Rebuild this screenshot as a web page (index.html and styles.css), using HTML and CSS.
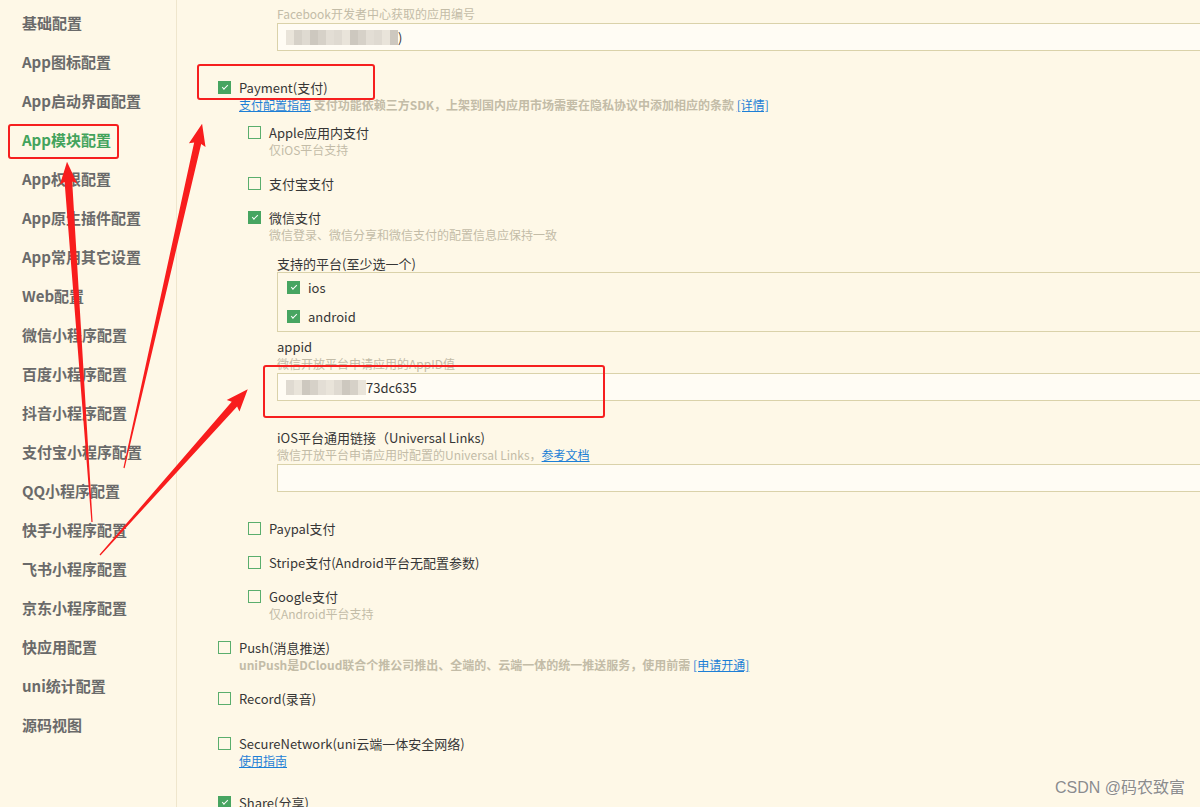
FILE: index.html
```html
<!DOCTYPE html>
<html lang="zh-CN">
<head>
    <meta charset="UTF-8">
    <title>manifest.json - App模块配置</title>
    <link rel="stylesheet" href="styles.css">
</head>
<body>
<div class="page">
    <nav class="side">
        <a class="side-item">基础配置</a>
        <a class="side-item">App图标配置</a>
        <a class="side-item">App启动界面配置</a>
        <a class="side-item active">App模块配置</a>
        <a class="side-item">App权限配置</a>
        <a class="side-item">App原生插件配置</a>
        <a class="side-item">App常用其它设置</a>
        <a class="side-item">Web配置</a>
        <a class="side-item">微信小程序配置</a>
        <a class="side-item">百度小程序配置</a>
        <a class="side-item">抖音小程序配置</a>
        <a class="side-item">支付宝小程序配置</a>
        <a class="side-item">QQ小程序配置</a>
        <a class="side-item">快手小程序配置</a>
        <a class="side-item">飞书小程序配置</a>
        <a class="side-item">京东小程序配置</a>
        <a class="side-item">快应用配置</a>
        <a class="side-item">uni统计配置</a>
        <a class="side-item">源码视图</a>
    </nav>

    <main class="main">
        <!-- tail of the facebook block, scrolled off the top -->
        <div class="fields fields-top">
            <div class="field">
                <div class="field-desc">Facebook开发者中心获取的应用编号</div>
                <div class="input">
                    <span class="mosaic">
                        <i class="m1"></i><i class="m2"></i><i class="m3"></i><i class="m4"></i><i class="m2"></i><i class="m5"></i><i class="m3"></i><i class="m1"></i><i class="m4"></i><i class="m2"></i><i class="m5"></i><i class="m3"></i><i class="m1"></i><i class="m4"></i>
                    </span>
                    <span>)</span>
                </div>
            </div>
        </div>

        <div class="item">
            <div class="row"><span class="cb on"></span>Payment(支付)</div>
            <div class="desc strong"><a class="link">支付配置指南</a> 支付功能依赖三方SDK，上架到国内应用市场需要在隐私协议中添加相应的条款 <a class="link">[详情]</a></div>
            <div class="sub">
                <div class="item">
                    <div class="row"><span class="cb"></span>Apple应用内支付</div>
                    <div class="desc">仅iOS平台支持</div>
                </div>
                <div class="item">
                    <div class="row"><span class="cb"></span>支付宝支付</div>
                </div>
                <div class="item">
                    <div class="row"><span class="cb on"></span>微信支付</div>
                    <div class="desc">微信登录、微信分享和微信支付的配置信息应保持一致</div>
                    <div class="fields">
                        <div class="field field-tight">
                            <div class="field-label">支持的平台(至少选一个)</div>
                            <div class="platforms">
                                <div class="row"><span class="cb on"></span>ios</div>
                                <div class="row"><span class="cb on"></span>android</div>
                            </div>
                        </div>
                        <div class="field">
                            <div class="field-label">appid</div>
                            <div class="field-desc">微信开放平台申请应用的AppID值</div>
                            <div class="input">
                                <span class="mosaic">
                                    <i class="m3"></i><i class="m1"></i><i class="m4"></i><i class="m2"></i><i class="m5"></i><i class="m1"></i><i class="m3"></i><i class="m4"></i><i class="m2"></i><i class="m1"></i>
                                </span>
                                <span>73dc635</span>
                            </div>
                        </div>
                        <div class="field">
                            <div class="field-label">iOS平台通用链接（Universal Links)</div>
                            <div class="field-desc">微信开放平台申请应用时配置的Universal Links，<a class="link">参考文档</a></div>
                            <div class="input"></div>
                        </div>
                    </div>
                </div>
                <div class="item">
                    <div class="row"><span class="cb"></span>Paypal支付</div>
                </div>
                <div class="item">
                    <div class="row"><span class="cb"></span>Stripe支付(Android平台无配置参数)</div>
                </div>
                <div class="item">
                    <div class="row"><span class="cb"></span>Google支付</div>
                    <div class="desc">仅Android平台支持</div>
                </div>
            </div>
        </div>

        <div class="item">
            <div class="row"><span class="cb"></span>Push(消息推送)</div>
            <div class="desc strong">uniPush是DCloud联合个推公司推出、全端的、云端一体的统一推送服务，使用前需 <a class="link">[申请开通]</a></div>
        </div>
        <div class="item item-loose">
            <div class="row"><span class="cb"></span>Record(录音)</div>
        </div>
        <div class="item item-wide">
            <div class="row"><span class="cb"></span>SecureNetwork(uni云端一体安全网络)</div>
            <div class="desc"><a class="link">使用指南</a></div>
        </div>
        <div class="item">
            <div class="row"><span class="cb on"></span>Share(分享)</div>
        </div>
    </main>

    <!-- screenshot annotations -->
    <div class="mark mark-nav"></div>
    <div class="mark mark-pay"></div>
    <div class="mark mark-appid"></div>
    <svg class="arrows" width="1200" height="807" viewBox="0 0 1200 807">
        <g fill="#f81d1d">
            <polygon transform="translate(92,522) rotate(-93.97)" points="0,-0.6 341,-3.8 339,-8.5 361,0 339,8.5 341,3.8 0,0.6"/>
            <polygon transform="translate(124,468) rotate(-77.22)" points="0,-0.6 333,-3.6 331,-8.5 353,0 331,8.5 333,3.6 0,0.6"/>
            <polygon transform="translate(100,555) rotate(-48.28)" points="0,-0.6 202,-3.6 200,-8.5 222,0 200,8.5 202,3.6 0,0.6"/>
        </g>
    </svg>
    <div class="watermark">CSDN @码农致富</div>
</div>
</body>
</html>
```

FILE: styles.css
```css
body {
    margin: 0;
    padding: 0;
    background-color: #fef8e7;
    font-family: "Noto Sans CJK SC", "Noto Sans", sans-serif;
    color: #333;
}

.page {
    position: relative;
    display: flex;
    width: 1200px;
    height: 807px;
    overflow: hidden;
}

/* left menu */
.side {
    flex: 0 0 176px;
    padding-top: 3px;
    border-right: 1px solid #efe6cd;
}

.side-item {
    display: block;
    height: 39px;
    line-height: 39px;
    padding-left: 22px;
    font-size: 15px;
    font-weight: bold;
    color: #6a6a6a;
    white-space: nowrap;
}

.side-item.active {
    color: #43a35c;
}

/* right form */
.main {
    flex: 1;
    min-width: 0;
    padding: 5px 0 0 41px;
    overflow: hidden;
}

.item {
    margin-bottom: 17px;
}

.item-loose {
    margin-bottom: 28px;
}

.item-wide {
    margin-bottom: 25px;
}

.row {
    display: flex;
    align-items: center;
    gap: 8px;
    height: 17px;
    line-height: 17px;
    font-size: 13px;
    color: #363636;
    white-space: nowrap;
}

.cb {
    flex: 0 0 13px;
    position: relative;
    width: 13px;
    height: 13px;
    box-sizing: border-box;
    border: 1px solid #5aae6d;
}

.cb.on {
    background-color: #47a561;
    border-color: #47a561;
}

.cb.on::after {
    content: "";
    position: absolute;
    left: 3px;
    top: 3px;
    width: 5px;
    height: 2px;
    border-left: 1.5px solid #fff;
    border-bottom: 1.5px solid #fff;
    transform: rotate(-45deg);
}

.desc {
    padding-left: 21px;
    line-height: 17px;
    font-size: 12px;
    color: #c3bca7;
    white-space: nowrap;
}

.desc.strong {
    font-weight: bold;
}

.link {
    color: #1d7fd6;
    text-decoration: underline;
    font-weight: normal;
}

.sub {
    margin-left: 30px;
    padding-top: 11px;
}

/* text fields */
.fields {
    margin-left: 29px;
    padding: 12px 0 11px;
}

.fields-top {
    margin-left: 59px;
    padding: 0;
    margin-bottom: 28px;
}

.field {
    margin-bottom: 28px;
}

.field:last-child {
    margin-bottom: 0;
}

.field-tight {
    margin-bottom: 6px;
}

.field-label {
    line-height: 17px;
    font-size: 13px;
    color: #363636;
    white-space: nowrap;
}

.field-desc {
    line-height: 18px;
    font-size: 12px;
    color: #c3bca7;
    white-space: nowrap;
}

.input {
    display: flex;
    align-items: center;
    width: 1000px;
    height: 28px;
    box-sizing: border-box;
    padding-left: 8px;
    background-color: #fffcf4;
    border: 1px solid #dad2aa;
    font-size: 13px;
    color: #333;
}

.platforms {
    display: flex;
    flex-direction: column;
    gap: 12px;
    width: 1000px;
    padding: 6px 9px;
    border: 1px solid #dad2aa;
}

/* blurred secret in the inputs */
.mosaic {
    display: flex;
    height: 15px;
}

.mosaic i {
    display: block;
    width: 8px;
    height: 15px;
}

.mosaic .m1 { background-color: #e9e4da; }
.mosaic .m2 { background-color: #d6d1c8; }
.mosaic .m3 { background-color: #dfdad1; }
.mosaic .m4 { background-color: #cdc8bf; }
.mosaic .m5 { background-color: #e3ded5; }

/* red marks drawn over the screenshot */
.mark {
    position: absolute;
    box-sizing: border-box;
    border: 2px solid #f61f1f;
    border-radius: 3px;
}

.mark-nav {
    left: 8px;
    top: 124px;
    width: 111px;
    height: 35px;
}

.mark-pay {
    left: 197px;
    top: 64px;
    width: 178px;
    height: 36px;
}

.mark-appid {
    left: 263px;
    top: 365px;
    width: 342px;
    height: 53px;
}

.arrows {
    position: absolute;
    left: 0;
    top: 0;
    pointer-events: none;
}

.watermark {
    position: absolute;
    right: 15px;
    bottom: 9px;
    font-family: "Liberation Sans", "Noto Sans CJK SC", sans-serif;
    font-size: 16px;
    color: #8c8c8c;
    text-shadow: 0 0 2px #fff;
}
```
